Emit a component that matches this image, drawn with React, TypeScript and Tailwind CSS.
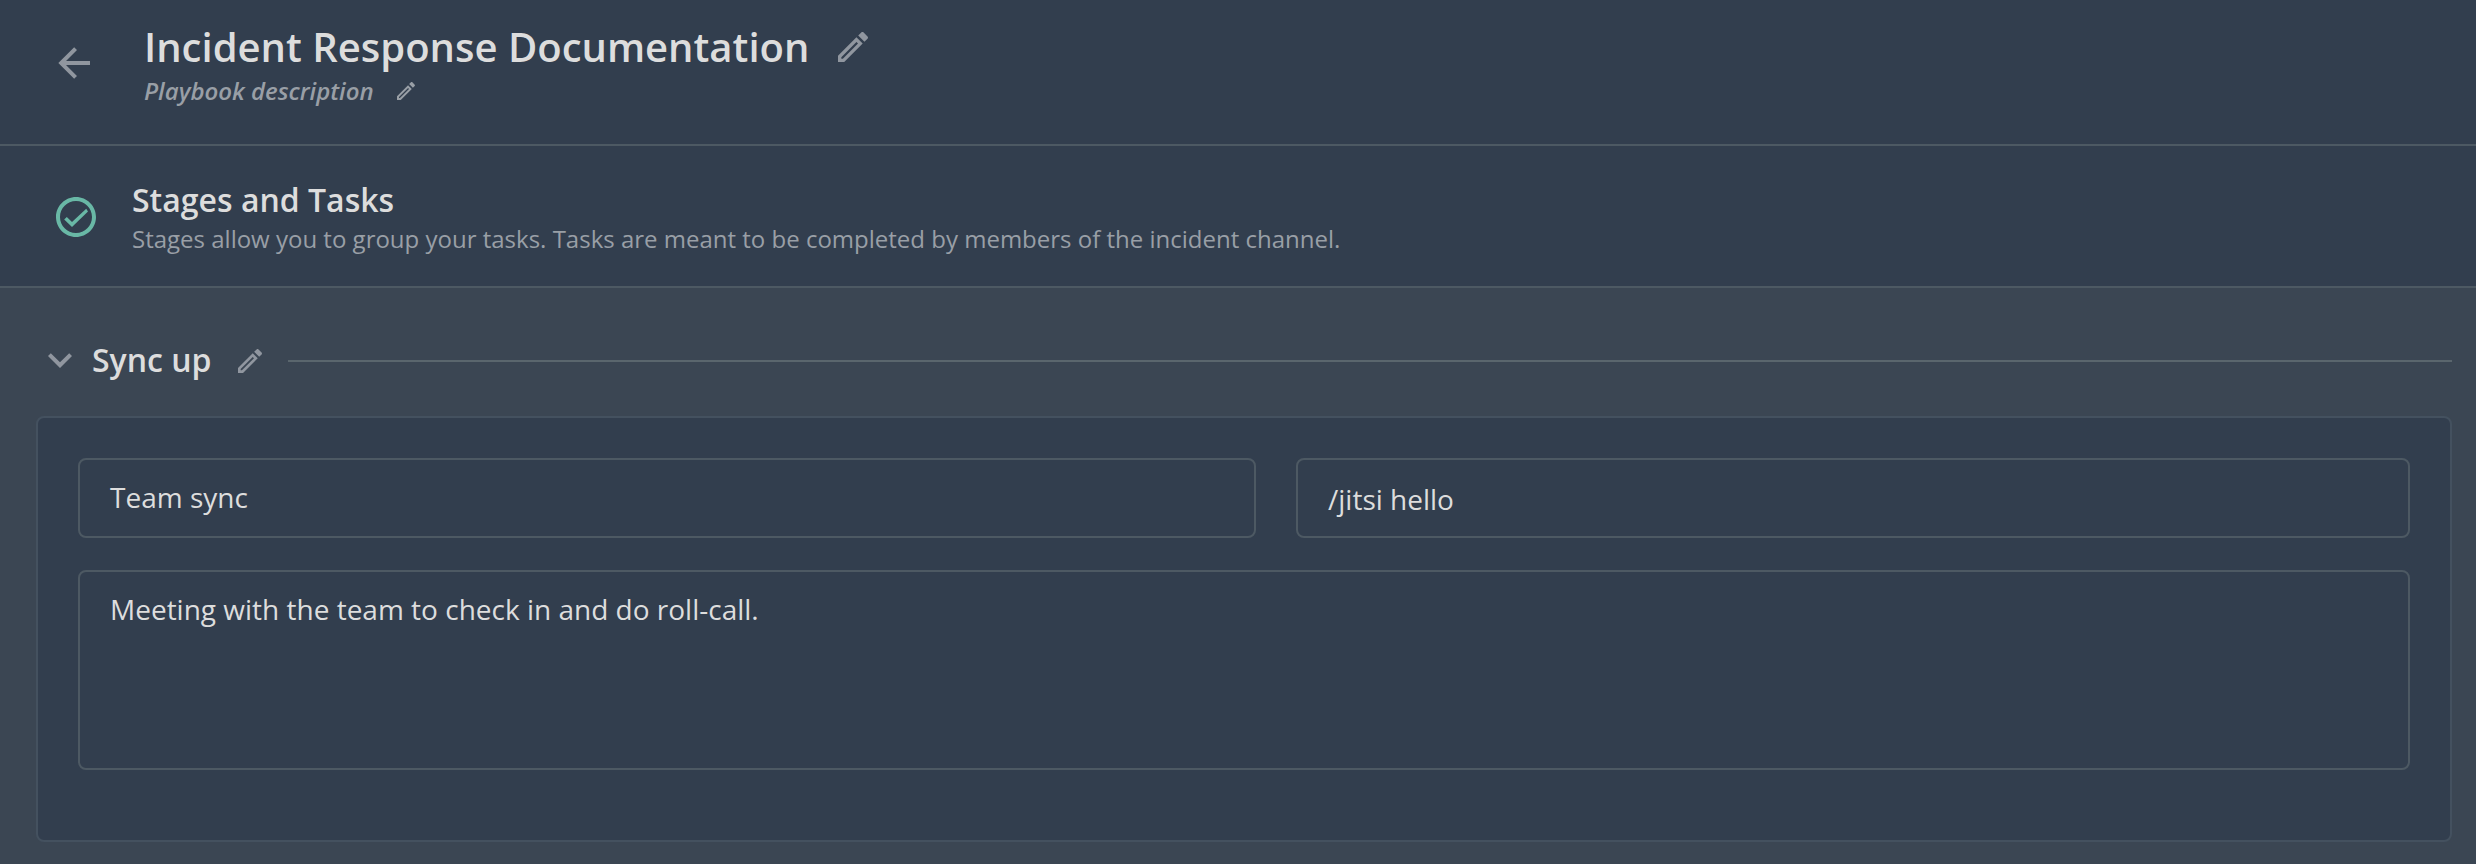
const ICONS = {
  arrowLeft: 'M20,11V13H8L13.5,18.5L12.08,19.92L4.16,12L12.08,4.08L13.5,5.5L8,11H20Z',
  pencil:
    'M14.06,9L15,9.94L5.92,19H5V18.08L14.06,9M17.66,3C17.41,3 17.15,3.1 16.96,3.29L15.13,5.12L18.88,8.87L20.71,7.04C21.1,6.65 21.1,6 20.71,5.63L18.37,3.29C18.17,3.09 17.92,3 17.66,3M14.06,6.19L3,17.25V21H6.75L17.81,9.94L14.06,6.19Z',
  chevronDown: 'M7.41,8.58L12,13.17L16.59,8.58L18,10L12,16L6,10L7.41,8.58Z',
  checkCircle:
    'M12 2C6.5 2 2 6.5 2 12S6.5 22 12 22 22 17.5 22 12 17.5 2 12 2M12 20C7.59 20 4 16.41 4 12S7.59 4 12 4 20 7.59 20 12 16.41 20 12 20M17.1 7.9L10 14.55L7.4 11.95L6.1 13.2L10 17L18 9.2Z',
};

function Icon({ name, className }: { name: keyof typeof ICONS; className: string }) {
  return (
    <svg viewBox="0 0 24 24" fill="currentColor" aria-hidden="true" className={`shrink-0 ${className}`}>
      <path d={ICONS[name]} />
    </svg>
  );
}

export default function App() {
  return (
    <div className="flex h-[864px] w-full flex-col overflow-hidden bg-[#3b4653] font-['Open_Sans','Noto_Sans',sans-serif] text-[#dddddd]">
      <header className="flex h-[146px] shrink-0 items-start border-b-2 border-[#4d5963] bg-[#323e4e] pl-[50px]">
        <button className="mt-[39px] text-[#90969f]">
          <Icon name="arrowLeft" className="size-12" />
        </button>
        <div className="ml-[46px] flex flex-col">
          <div className="mt-[19px] flex h-14 items-center gap-6">
            <h1 className="text-[40px] leading-[56px] font-semibold whitespace-nowrap">Incident Response Documentation</h1>
            <Icon name="pencil" className="size-10 text-[#90969f]" />
          </div>
          <div className="flex h-8 items-center gap-5 text-[#999fa6]">
            <p className="text-[24px] leading-8 font-semibold whitespace-nowrap italic">Playbook description</p>
            <Icon name="pencil" className="size-6" />
          </div>
        </div>
      </header>

      <section className="flex h-[142px] shrink-0 items-start border-b-2 border-[#4d5963] bg-[#323e4e] pl-[52px]">
        <Icon name="checkCircle" className="mt-[47px] size-12 text-[#69b8a6]" />
        <div className="ml-8 pt-8">
          <h2 className="text-[32px] leading-[44px] font-semibold">Stages and Tasks</h2>
          <p className="mt-px text-[24px] leading-8 text-[#999fa6]">
            Stages allow you to group your tasks. Tasks are meant to be completed by members of the incident channel.
          </p>
        </div>
      </section>

      <main className="flex flex-col pr-6 pl-9">
        <div className="mt-12 flex h-12 items-center">
          <Icon name="chevronDown" className="size-12 text-[#90969f]" />
          <h3 className="ml-2 text-[32px] leading-[48px] font-semibold whitespace-nowrap">Sync up</h3>
          <Icon name="pencil" className="mt-px ml-[22px] size-8 text-[#90969f]" />
          <div className="mt-0.5 ml-[22px] h-0.5 grow bg-[#5a666d]" />
        </div>

        <div className="mt-8 flex h-[426px] flex-col gap-8 rounded-lg border-2 border-[#44515f] bg-[#323e4e] p-10 text-[28px]">
          <div className="grid grid-cols-[1178px_1114px] gap-10">
            <div className="h-20 rounded-lg border-2 border-[#4d5963] px-[30px] leading-[74px]">Team sync</div>
            <div className="h-20 rounded-lg border-2 border-[#4d5963] px-[30px] pt-px leading-[76px]">/jitsi hello</div>
          </div>
          <div className="h-[200px] rounded-lg border-2 border-[#4d5963] px-[30px] pt-[17px] leading-10">
            Meeting with the team to check in and do roll-call.
          </div>
        </div>
      </main>
    </div>
  );
}
